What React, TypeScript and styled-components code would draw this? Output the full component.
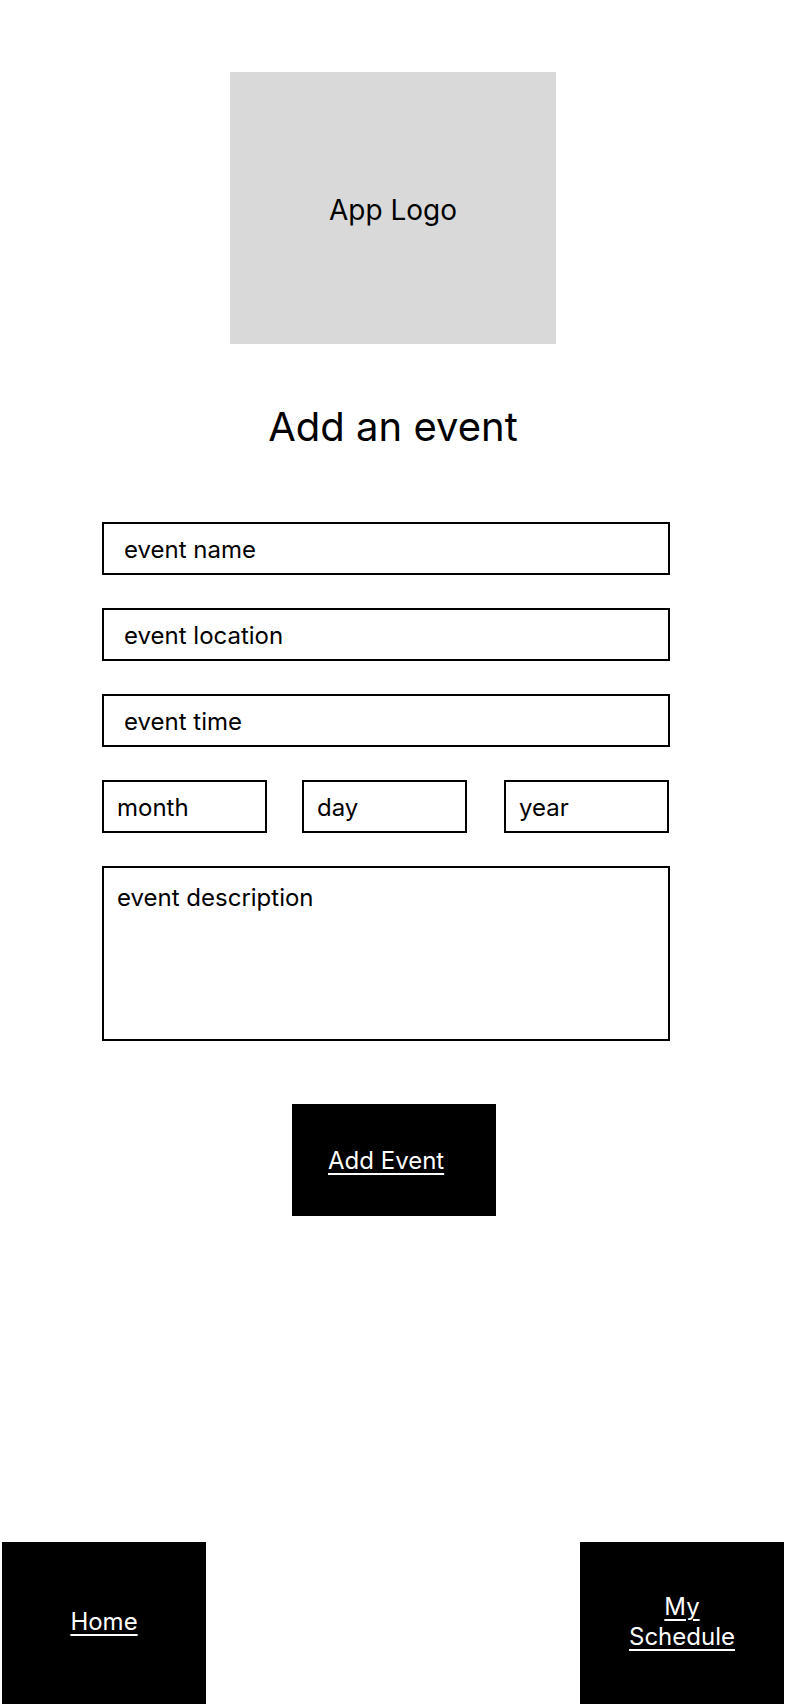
import styled, { createGlobalStyle } from "styled-components";

const GlobalStyle = createGlobalStyle`
  body {
    margin: 0;
    background: #fff;
    font-family: Inter, "Noto Sans", "Liberation Sans", sans-serif;
    color: #000;
  }
`;

// layout
const Page = styled.div`
  width: 786px;
  min-height: 1704px;
  display: flex;
  flex-direction: column;
`;

const LogoBox = styled.div`
  box-sizing: border-box;
  width: 326px;
  height: 272px;
  margin: 72px auto 0;
  padding-top: 4px;
  background: #d9d9d9;
  display: flex;
  align-items: center;
  justify-content: center;
  font-size: 28px;
`;

const Title = styled.h1`
  margin: 59px 0 0;
  font-size: 40px;
  font-weight: 400;
  line-height: 48px;
  text-align: center;
`;

const Form = styled.form`
  width: 568px;
  margin: 71px 0 0 102px;
  display: flex;
  flex-direction: column;
  gap: 33px;
`;

const fieldBase = `
  box-sizing: border-box;
  border: 2px solid #000;
  border-radius: 0;
  background: #fff;
  font-family: Inter, "Noto Sans", "Liberation Sans", sans-serif;
  font-size: 24px;
  color: #000;
  outline: none;
  margin: 0;
  &::placeholder {
    color: #000;
    opacity: 1;
  }
`;

const TextField = styled.input<{ $pad: number }>`
  ${fieldBase}
  width: 100%;
  height: 53px;
  padding: 2px 0 0 ${(p) => p.$pad}px;
`;

const DateRow = styled.div`
  display: flex;
`;

const DateField = styled(TextField)<{ $gap?: number }>`
  width: 165px;
  margin-left: ${(p) => p.$gap ?? 0}px;
`;

const Description = styled.textarea`
  ${fieldBase}
  width: 100%;
  height: 175px;
  padding: 15px 13px;
  resize: none;
  line-height: 29px;
`;

const SubmitButton = styled.button`
  width: 204px;
  height: 112px;
  margin: 63px 0 0 292px;
  padding: 0 0 0 36px;
  border: none;
  background: #000;
  color: #fff;
  display: flex;
  align-items: center;
  font-family: inherit;
  font-size: 24px;
  text-decoration: underline;
  text-underline-offset: 4px;
  text-decoration-thickness: 1.5px;
  cursor: pointer;
`;

const Footer = styled.nav`
  margin-top: auto;
  padding: 0 2px;
  display: flex;
  justify-content: space-between;
`;

const NavButton = styled.a`
  box-sizing: border-box;
  width: 204px;
  height: 162px;
  padding-bottom: 2px;
  background: #000;
  color: #fff;
  display: flex;
  align-items: center;
  justify-content: center;
  text-align: center;
  font-size: 24px;
  line-height: 30px;
  text-decoration: underline;
  text-underline-offset: 4px;
  text-decoration-thickness: 1.5px;
  cursor: pointer;
`;

const NavLabel = styled.span`
  max-width: 120px;
`;

const App = () => {
  return (
    <>
      <GlobalStyle />
      <Page>
        <LogoBox>App Logo</LogoBox>
        <Title>Add an event</Title>
        <Form onSubmit={(e) => e.preventDefault()}>
          <TextField $pad={20} placeholder="event name" />
          <TextField $pad={20} placeholder="event location" />
          <TextField $pad={20} placeholder="event time" />
          <DateRow>
            <DateField $pad={13} placeholder="month" />
            <DateField $pad={13} $gap={35} placeholder="day" />
            <DateField $pad={13} $gap={37} placeholder="year" />
          </DateRow>
          <Description placeholder="event description" />
        </Form>
        <SubmitButton type="button">Add Event</SubmitButton>
        <Footer>
          <NavButton>
            <NavLabel>Home</NavLabel>
          </NavButton>
          <NavButton>
            <NavLabel>My Schedule</NavLabel>
          </NavButton>
        </Footer>
      </Page>
    </>
  );
};

export default App;
